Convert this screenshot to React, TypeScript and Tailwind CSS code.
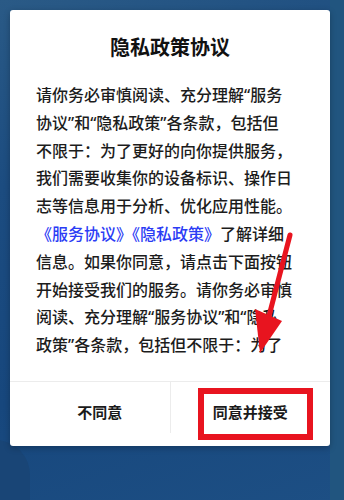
import React from "react";

const lines: React.ReactNode[] = [
  "请你务必审慎阅读、充分理解“服务",
  "协议”和“隐私政策”各条款，包括但",
  "不限于：为了更好的向你提供服务，",
  "我们需要收集你的设备标识、操作日",
  "志等信息用于分析、优化应用性能。",
  <>
    <span className="text-[#2b3cf5]">《服务协议》《隐私政策》</span>了解详细
  </>,
  "信息。如果你同意，请点击下面按钮",
  "开始接受我们的服务。请你务必审慎",
  "阅读、充分理解“服务协议”和“隐私",
  "政策”各条款，包括但不限于：为了",
];

const App = () => {
  return (
    <div
      className="relative w-[344px] h-[500px] overflow-hidden bg-[linear-gradient(160deg,#2a5a86_0%,#1c4c80_30%,#17477d_65%,#1d4f84_100%)] pt-[10px]"
      style={{ fontFamily: '"Noto Sans", "Noto Sans CJK SC", sans-serif' }}
    >
      {/* soft background shapes */}
      <div className="absolute -left-[40px] top-[440px] w-[70px] h-[120px] rounded-full bg-[#194576]" />
      <div className="absolute right-0 top-0 w-[14px] h-[500px] bg-[#21557f]" />

      <div className="relative mx-[10px] w-[320px] h-[436px] bg-white rounded-[3px] shadow-[0_2px_6px_rgba(0,0,0,0.25)] flex flex-col">
        <h1 className="pt-[24px] text-center text-[20px] leading-[28px] font-semibold text-[#111]">
          隐私政策协议
        </h1>
        <div className="flex-1 mt-[20px] px-[26px] text-[16px] leading-[27.8px] font-medium text-[#1c1c1c]">
          {lines.map((l, i) => (
            <div key={i} className="whitespace-nowrap">
              {l}
            </div>
          ))}
        </div>
        <div className="h-[65px] border-t border-[#ececec] flex">
          <button className="w-[159.5px] h-full pb-[3px] text-[15px] font-semibold text-[#1a1a1a]">
            <span className="pl-5">不同意</span>
          </button>
          <div className="w-px h-[51px] bg-[#ececec]" />
          <button className="relative w-[159.5px] h-full pb-[3px] text-[15px] font-semibold text-[#1a1a1a]">
            同意并接受
            <span className="absolute left-[27px] top-[6px] w-[115px] h-[52px] border-[6px] border-[#e8141f]" />
          </button>
        </div>
      </div>

      {/* red annotation arrow */}
      <svg className="absolute left-0 top-0" width="344" height="500" viewBox="0 0 344 500">
        <line x1="290" y1="235" x2="269" y2="316" stroke="#e8141f" strokeWidth="5" strokeLinecap="round" />
        <polygon points="255,309 282,321 260,353" fill="#e8141f" />
      </svg>
    </div>
  );
};

export default App;
